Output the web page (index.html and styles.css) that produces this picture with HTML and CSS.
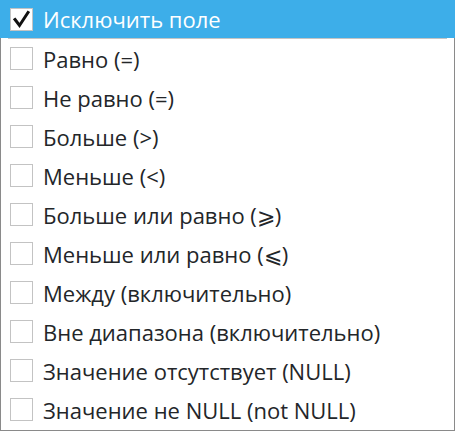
FILE: index.html
```html
<!DOCTYPE html>
<html>
<head>
<meta charset="utf-8">
<link rel="stylesheet" href="styles.css">
</head>
<body>
<div class="menu">
  <div class="header">
    <span class="box checked">
      <svg viewBox="0 0 23 23" width="23" height="23"><path d="M5 11.5 L9.5 17.5 L18 4.5" fill="none" stroke="#111" stroke-width="3" stroke-linecap="square" stroke-linejoin="miter"/></svg>
    </span>
    <span class="label">Исключить поле</span>
  </div>
  <div class="sep"></div>
  <div class="list">
    <div class="row"><span class="box"></span><span class="label">Равно (=)</span></div>
    <div class="row"><span class="box"></span><span class="label">Не равно (=)</span></div>
    <div class="row"><span class="box"></span><span class="label">Больше (&gt;)</span></div>
    <div class="row"><span class="box"></span><span class="label">Меньше (&lt;)</span></div>
    <div class="row"><span class="box"></span><span class="label">Больше или равно (⩾)</span></div>
    <div class="row"><span class="box"></span><span class="label">Меньше или равно (⩽)</span></div>
    <div class="row"><span class="box"></span><span class="label">Между (включительно)</span></div>
    <div class="row"><span class="box"></span><span class="label">Вне диапазона (включительно)</span></div>
    <div class="row"><span class="box"></span><span class="label">Значение отсутствует (NULL)</span></div>
    <div class="row"><span class="box"></span><span class="label">Значение не NULL (not NULL)</span></div>
  </div>
</div>
</body>
</html>
```
FILE: styles.css
```css
html, body {
  margin: 0;
  padding: 0;
  background: #ffffff;
}
.menu {
  width: 455px;
  height: 431px;
  box-sizing: border-box;
  font-family: "Open Sans", "Noto Sans", sans-serif;
  font-size: 22px;
  color: #232629;
  display: flex;
  flex-direction: column;
}
.header {
  height: 38px;
  background: #3daee9;
  color: #ffffff;
  display: flex;
  align-items: center;
  padding-left: 10px;
  gap: 10px;
  flex: none;
}
.sep {
  height: 1px;
  margin: 0 8px;
  background: #c4c4c4;
  flex: none;
}
.list {
  flex: 1;
  border: 1px solid #8a8a8a;
  border-top: none;
  padding-top: 1px;
  margin-top: -1px;
  display: flex;
  flex-direction: column;
}
.row {
  height: 39px;
  display: flex;
  align-items: center;
  padding-left: 9px;
  gap: 10px;
}
.box {
  width: 23px;
  height: 23px;
  box-sizing: border-box;
  border: 1px solid #c3c3c3;
  background: #ffffff;
  flex: none;
  display: block;
}
.box svg {
  display: block;
  margin: -1px;
}
.label {
  white-space: nowrap;
  line-height: 1;
}
```
